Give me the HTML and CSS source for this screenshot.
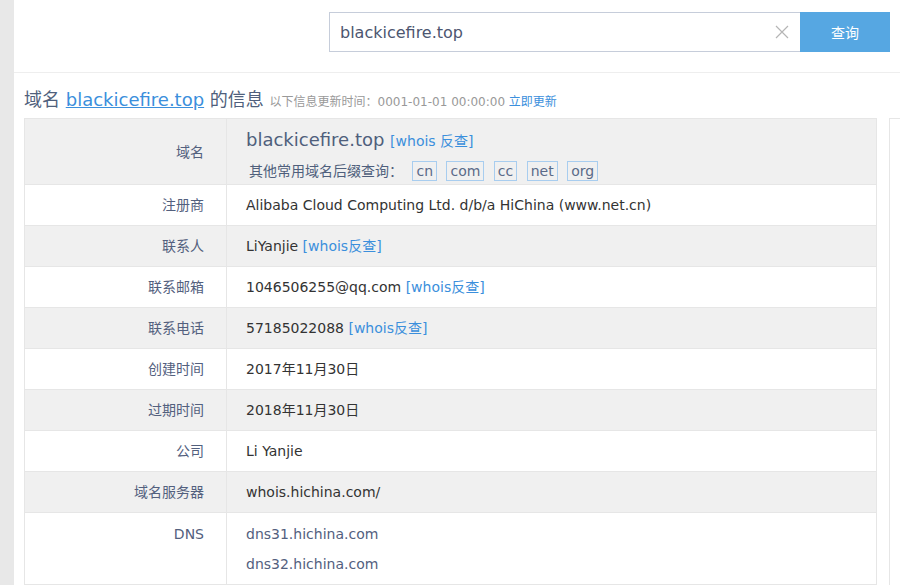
FILE: index.html
```html
<!DOCTYPE html>
<html>
<head>
    <title>域名信息查询</title>
    <meta name="viewport" content="width=device-width, initial-scale=1">
    <link rel="stylesheet" href="styles.css">
</head>
<body>
    <div class="page">
        <div class="header">
            <form class="search">
                <div class="search-box">
                    <input type="text" class="search-input" value="blackicefire.top">
                    <span class="clear">
                        <svg width="14" height="14" viewBox="0 0 14 14"><path d="M1 1L13 13M13 1L1 13" stroke="#b5b5b5" stroke-width="1.2" fill="none"/></svg>
                    </span>
                </div>
                <button type="button" class="search-button">查询</button>
            </form>
        </div>
        <div class="main">
            <div class="content">
                <h2 class="title">域名 <a href="#" class="domain-link">blackicefire.top</a> 的信息 <small>以下信息更新时间：0001-01-01 00:00:00 <a href="#">立即更新</a></small></h2>
                <table class="info">
                    <tr class="odd">
                        <td class="label">域名</td>
                        <td class="value first">
                            <div class="domain">blackicefire.top <a href="#">[whois 反查]</a></div>
                            <div class="suffix">其他常用域名后缀查询：
                                <a href="#" class="tag">cn</a>
                                <a href="#" class="tag">com</a>
                                <a href="#" class="tag">cc</a>
                                <a href="#" class="tag">net</a>
                                <a href="#" class="tag">org</a>
                            </div>
                        </td>
                    </tr>
                    <tr>
                        <td class="label">注册商</td>
                        <td class="value">Alibaba Cloud Computing Ltd. d/b/a HiChina (www.net.cn)</td>
                    </tr>
                    <tr class="odd">
                        <td class="label">联系人</td>
                        <td class="value">LiYanjie <a href="#">[whois反查]</a></td>
                    </tr>
                    <tr>
                        <td class="label">联系邮箱</td>
                        <td class="value">1046506255@qq.com <a href="#">[whois反查]</a></td>
                    </tr>
                    <tr class="odd">
                        <td class="label">联系电话</td>
                        <td class="value">57185022088 <a href="#">[whois反查]</a></td>
                    </tr>
                    <tr>
                        <td class="label">创建时间</td>
                        <td class="value">2017年11月30日</td>
                    </tr>
                    <tr class="odd">
                        <td class="label">过期时间</td>
                        <td class="value">2018年11月30日</td>
                    </tr>
                    <tr>
                        <td class="label">公司</td>
                        <td class="value">Li Yanjie</td>
                    </tr>
                    <tr class="odd">
                        <td class="label">域名服务器</td>
                        <td class="value">whois.hichina.com/</td>
                    </tr>
                    <tr class="dns-row">
                        <td class="label top">DNS</td>
                        <td class="value dns">
                            <div>dns31.hichina.com</div>
                            <div>dns32.hichina.com</div>
                        </td>
                    </tr>
                </table>
            </div>
            <div class="sidebar"></div>
        </div>
    </div>
</body>
</html>
```

FILE: styles.css
```css
* {
    box-sizing: border-box;
}

html, body {
    margin: 0;
    padding: 0;
    overflow: hidden;
}

body {
    font-family: "DejaVu Sans", "Noto Sans CJK SC", sans-serif;
    background-color: #e8e8e8;
    color: #333;
}

a {
    color: #3b8fdc;
    text-decoration: none;
}

.page {
    margin-left: 14px;
    background-color: #fff;
    height: 585px;
    overflow: hidden;
}

.header {
    height: 73px;
    border-bottom: 1px solid #eee;
    padding-top: 12px;
}

.search {
    display: flex;
    margin-left: 315px;
}

.search-box {
    position: relative;
    width: 471px;
    height: 40px;
    border: 1px solid #c6cdda;
    border-right: none;
}

.search-input {
    width: 100%;
    height: 100%;
    border: none;
    outline: none;
    padding: 0 40px 0 10px;
    font-family: "DejaVu Sans", "Noto Sans CJK SC", sans-serif;
    font-size: 16px;
    color: #4d5670;
}

.clear {
    position: absolute;
    right: 11px;
    top: 12px;
    width: 14px;
    height: 14px;
    display: flex;
}

.search-button {
    width: 90px;
    height: 40px;
    border: none;
    background-color: #56a7e2;
    color: #fff;
    font-family: "Noto Sans CJK SC", sans-serif;
    font-size: 14px;
    cursor: pointer;
}

.main {
    display: flex;
    gap: 12px;
    padding-left: 10px;
}

.content {
    width: 853px;
    flex-shrink: 0;
}

.title {
    height: 22px;
    margin: 16px 0 7px;
    font-size: 18px;
    font-weight: normal;
    line-height: 22px;
    color: #4f5f7c;
    white-space: nowrap;
}

.title .domain-link {
    text-decoration: underline;
}

.title small {
    font-size: 12px;
    color: #999;
}

.info {
    width: 100%;
    border-collapse: collapse;
    border: 1px solid #e6e6e6;
    font-size: 14px;
}

.info td {
    border-top: 1px solid #e6e6e6;
    height: 41px;
    padding: 0 20px 0 19px;
    line-height: 20px;
    vertical-align: middle;
}

.info tr.odd td {
    background-color: #f0f0f0;
}

.info td.label {
    width: 202px;
    padding-right: 22px;
    text-align: right;
    color: #53607e;
    border-right: 1px solid #e6e6e6;
}

.info td.label.top {
    vertical-align: top;
    padding-top: 11px;
}

.info td.value.first {
    height: 65px;
    padding: 8px 20px 2px 19px;
}

.domain {
    height: 26px;
    font-size: 18px;
    line-height: 26px;
    color: #4f5f7c;
}

.domain a {
    font-size: 14px;
}

.suffix {
    height: 22px;
    margin-top: 7px;
    line-height: 22px;
    font-size: 14px;
    color: #4f5f7c;
    padding-left: 3px;
    white-space: nowrap;
}

.tag {
    display: inline-block;
    vertical-align: top;
    margin-top: 1px;
    border: 1px solid #a8cdef;
    padding: 0 3px;
    line-height: 18px;
    margin-left: 5px;
    font-size: 14px;
    color: #5a6a88;
}

.tag + .tag {
    margin-left: 5px;
}

.info td.dns {
    height: 71px;
    padding: 11px 20px 10px 19px;
    vertical-align: top;
    color: #53607e;
}

.dns div {
    height: 20px;
}

.dns div + div {
    margin-top: 10px;
}

.sidebar {
    width: 300px;
    flex-shrink: 0;
    margin-top: 45px;
    border: 1px solid #e6e6e6;
    height: 500px;
}
```
